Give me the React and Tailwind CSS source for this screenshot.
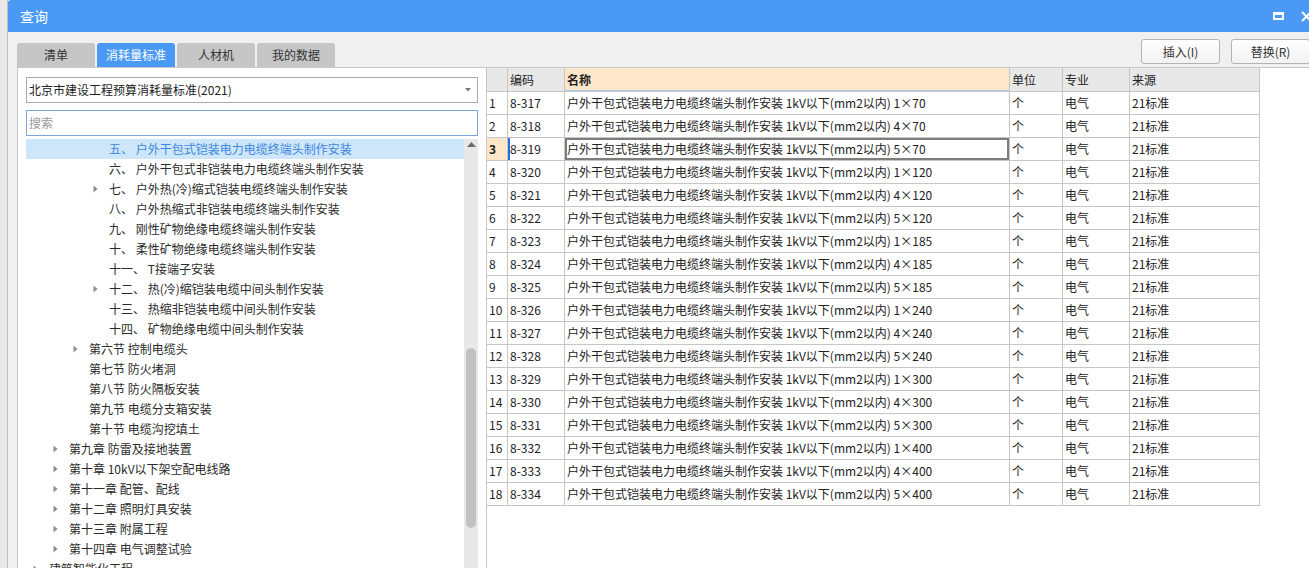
const tree = [
  { l: 3, t: '五、 户外干包式铠装电力电缆终端头制作安装', sel: true },
  { l: 3, t: '六、 户外干包式非铠装电力电缆终端头制作安装' },
  { l: 3, t: '七、 户外热(冷)缩式铠装电缆终端头制作安装', arrow: true },
  { l: 3, t: '八、 户外热缩式非铠装电缆终端头制作安装' },
  { l: 3, t: '九、 刚性矿物绝缘电缆终端头制作安装' },
  { l: 3, t: '十、 柔性矿物绝缘电缆终端头制作安装' },
  { l: 3, t: '十一、 T接端子安装' },
  { l: 3, t: '十二、 热(冷)缩铠装电缆中间头制作安装', arrow: true },
  { l: 3, t: '十三、 热缩非铠装电缆中间头制作安装' },
  { l: 3, t: '十四、 矿物绝缘电缆中间头制作安装' },
  { l: 2, t: '第六节 控制电缆头', arrow: true },
  { l: 2, t: '第七节 防火堵洞' },
  { l: 2, t: '第八节 防火隔板安装' },
  { l: 2, t: '第九节 电缆分支箱安装' },
  { l: 2, t: '第十节 电缆沟挖填土' },
  { l: 1, t: '第九章 防雷及接地装置', arrow: true },
  { l: 1, t: '第十章 10kV以下架空配电线路', arrow: true },
  { l: 1, t: '第十一章 配管、配线', arrow: true },
  { l: 1, t: '第十二章 照明灯具安装', arrow: true },
  { l: 1, t: '第十三章 附属工程', arrow: true },
  { l: 1, t: '第十四章 电气调整试验', arrow: true },
  { l: 0, t: '建筑智能化工程', arrow: true },
];

const indent = ['pl-[7px]', 'pl-[27px]', 'pl-[47px]', 'pl-[67px]'];

const sizes = ['1×70', '4×70', '5×70', '1×120', '4×120', '5×120', '1×185', '4×185', '5×185',
  '1×240', '4×240', '5×240', '1×300', '4×300', '5×300', '1×400', '4×400', '5×400'];

const rows = sizes.map((s, i) => ({
  n: i + 1,
  code: '8-' + (317 + i),
  name: '户外干包式铠装电力电缆终端头制作安装 1kV以下(mm2以内) ' + s,
}));

function Arrow() {
  return (
    <svg width="5" height="8" viewBox="0 0 5 8" className="shrink-0">
      <path d="M0.5 0.5 L4.5 4 L0.5 7.5 Z" fill="#8d8d8d" />
    </svg>
  );
}

const cell = 'h-full border-r border-[#c6c6c6] pl-[2px] flex items-center whitespace-nowrap overflow-hidden';

export default function App() {
  return (
    <div className="w-[1309px] h-[568px] overflow-hidden bg-[#e8e8e8] pl-[7px] font-['Noto_Sans_CJK_SC',sans-serif] text-[12px] text-[#222]">
      <div className="w-[1340px] h-full flex flex-col border-l border-[#bdbdbd] bg-[#f0f0f0]">
        {/* title bar */}
        <div className="h-[32px] shrink-0 bg-[#4a9af5] rounded-tl-[3px] flex items-center pl-[12px] text-white">
          <span className="text-[14px]">查询</span>
          <div className="ml-auto flex items-center gap-[17px] pr-[35px]">
            <div className="w-[11px] h-[8px] border-2 border-t-[3px] border-white" />
            <svg width="11" height="11" viewBox="0 0 11 11">
              <path d="M1 1 L10 10 M10 1 L1 10" stroke="white" strokeWidth="2" />
            </svg>
          </div>
        </div>

        {/* tabs + buttons */}
        <div className="h-[35px] shrink-0 flex pl-[9px]">
          <div className="flex gap-[2px] items-end">
            <div className="w-[78px] h-[24px] rounded-t-[3px] bg-[#c6c6c6] flex items-center justify-center text-[#333]">清单</div>
            <div className="w-[78px] h-[24px] rounded-t-[3px] bg-[#4a9af5] flex items-center justify-center text-white">消耗量标准</div>
            <div className="w-[78px] h-[24px] rounded-t-[3px] bg-[#c6c6c6] flex items-center justify-center text-[#333]">人材机</div>
            <div className="w-[78px] h-[24px] rounded-t-[3px] bg-[#c6c6c6] flex items-center justify-center text-[#333]">我的数据</div>
          </div>
          <div className="ml-auto flex gap-[11px] pt-[7px] pr-[37px]">
            <button className="w-[79px] h-[25px] rounded-[3px] border border-[#b3b3b3] bg-gradient-to-b from-white to-[#f2f2f2] text-[#333]">插入(I)</button>
            <button className="w-[79px] h-[25px] rounded-[3px] border border-[#b3b3b3] bg-gradient-to-b from-white to-[#f2f2f2] text-[#333]">替换(R)</button>
          </div>
        </div>

        {/* panels */}
        <div className="flex-1 flex pl-[9px] min-h-0">
          {/* left panel */}
          <div className="w-[469px] shrink-0 bg-white border-l border-t border-[#c8c8c8] flex flex-col pl-[8px] pr-[8px] pt-[9px]">
            <div className="h-[26px] border border-[#ababab] flex items-center pl-[2px] pr-[6px]">
              <span className="text-[#222]">北京市建设工程预算消耗量标准(2021)</span>
              <svg width="6" height="4" viewBox="0 0 6 4" className="ml-auto">
                <path d="M0 0 L6 0 L3 3.5 Z" fill="#7a7a7a" />
              </svg>
            </div>
            <div className="h-[26px] mt-[7px] border border-[#7ea5d6] flex items-center pl-[2px] text-[#9a9a9a]">搜索</div>
            <div className="flex-1 flex mt-[3px] min-h-0">
              <div className="flex-1 overflow-hidden">
                {tree.map((it, i) => (
                  <div
                    key={i}
                    className={`h-[20px] flex items-center whitespace-nowrap ${indent[it.l]} ${it.sel ? 'bg-[#cde6fa] text-[#3f87de]' : 'text-[#2b2b2b]'}`}
                  >
                    <span className="w-[16px] shrink-0 flex items-center">{it.arrow && <Arrow />}</span>
                    <span>{it.t}</span>
                  </div>
                ))}
              </div>
              <div className="w-[14px] shrink-0 bg-[#e8e8e8] flex flex-col items-center">
                <svg width="9" height="5" viewBox="0 0 9 5" className="mt-[3px]">
                  <path d="M0 5 L4.5 0 L9 5 Z" fill="#6b6b6b" />
                </svg>
                <div className="w-[10px] h-[180px] mt-[201px] rounded-full bg-[#c1c1c1]" />
              </div>
            </div>
          </div>

          {/* right panel */}
          <div className="flex-1 bg-white border-l border-t border-[#c8c8c8] font-['Noto_Sans_CJK_SC',sans-serif]">
            <div className="h-[24px] w-[773px] flex border-b border-[#c6c6c6]">
              <div className={`${cell} w-[21px] bg-[#e8e8e8]`} />
              <div className={`${cell} w-[57px] bg-[#e8e8e8]`}>编码</div>
              <div className={`${cell} w-[445px] bg-[#fde6c9] font-bold shadow-[inset_0_-1px_0_#a9c8ea]`}>名称</div>
              <div className={`${cell} w-[53px] bg-[#e8e8e8]`}>单位</div>
              <div className={`${cell} w-[67px] bg-[#e8e8e8]`}>专业</div>
              <div className={`${cell} w-[130px] bg-[#e8e8e8]`}>来源</div>
            </div>
            {rows.map((r) => {
              const sel = r.n === 3;
              return (
                <div key={r.n} className="h-[23px] w-[773px] flex border-b border-[#c6c6c6]">
                  <div className={`${cell} w-[21px] ${sel ? 'bg-[#fde6c9] font-bold' : ''}`}>{r.n}</div>
                  <div className={`${cell} w-[57px] ${sel ? 'shadow-[inset_2px_0_0_#1f6fdf]' : ''}`}>{r.code}</div>
                  <div className={`${cell} w-[445px] ${sel ? 'shadow-[inset_0_0_0_2px_#7d7d7d]' : ''}`}>{r.name}</div>
                  <div className={`${cell} w-[53px]`}>个</div>
                  <div className={`${cell} w-[67px]`}>电气</div>
                  <div className={`${cell} w-[130px]`}>21标准</div>
                </div>
              );
            })}
          </div>
        </div>
      </div>
    </div>
  );
}
